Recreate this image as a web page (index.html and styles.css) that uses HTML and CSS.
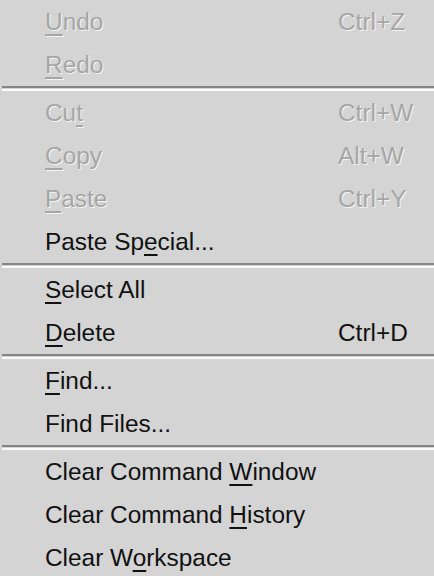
FILE: index.html
```html
<!DOCTYPE html>
<html lang="en">
<head>
  <meta charset="UTF-8" />
  <meta name="viewport" content="width=device-width, initial-scale=1.0"/>
  <title>Edit Menu</title>
  <link rel="stylesheet" href="styles.css">
</head>
<body>
  <ul class="menu">
    <li class="item disabled"><span class="label"><u>U</u>ndo</span><span class="key">Ctrl+Z</span></li>
    <li class="item disabled"><span class="label"><u>R</u>edo</span></li>
    <li class="sep"></li>
    <li class="item disabled"><span class="label">Cu<u>t</u></span><span class="key">Ctrl+W</span></li>
    <li class="item disabled"><span class="label"><u>C</u>opy</span><span class="key">Alt+W</span></li>
    <li class="item disabled"><span class="label"><u>P</u>aste</span><span class="key">Ctrl+Y</span></li>
    <li class="item"><span class="label">Paste Sp<u>e</u>cial...</span></li>
    <li class="sep"></li>
    <li class="item"><span class="label"><u>S</u>elect All</span></li>
    <li class="item"><span class="label"><u>D</u>elete</span><span class="key">Ctrl+D</span></li>
    <li class="sep"></li>
    <li class="item"><span class="label"><u>F</u>ind...</span></li>
    <li class="item"><span class="label">Find Files...</span></li>
    <li class="sep"></li>
    <li class="item"><span class="label">Clear Command <u>W</u>indow</span></li>
    <li class="item"><span class="label">Clear Command <u>H</u>istory</span></li>
    <li class="item"><span class="label">Clear W<u>o</u>rkspace</span></li>
  </ul>
</body>
</html>
```

FILE: styles.css
```css
html, body {
  margin: 0;
  padding: 0;
  background: #d4d4d4;
}

body {
  font-family: "Liberation Sans", Arial, sans-serif;
  font-size: 24.4px;
  color: #111;
  overflow: hidden;
}

.menu {
  list-style: none;
  margin: 0;
  padding: 0;
  width: 434px;
}

.item {
  display: flex;
  height: 43px;
  line-height: 43px;
  padding-left: 45px;
  white-space: nowrap;
}

.label {
  flex: 0 0 293px;
}

.key {
  flex: 1;
}

.item u {
  text-decoration-thickness: 2px;
  text-underline-offset: 4px;
}

.disabled {
  color: #a6a6a6;
  text-shadow: 1px 1px 0 #f4f4f4;
}

.sep {
  box-sizing: border-box;
  height: 5px;
  margin-left: 2px;
  border-top: 2px solid #858585;
  border-bottom: 2px solid #fafafa;
}
```
